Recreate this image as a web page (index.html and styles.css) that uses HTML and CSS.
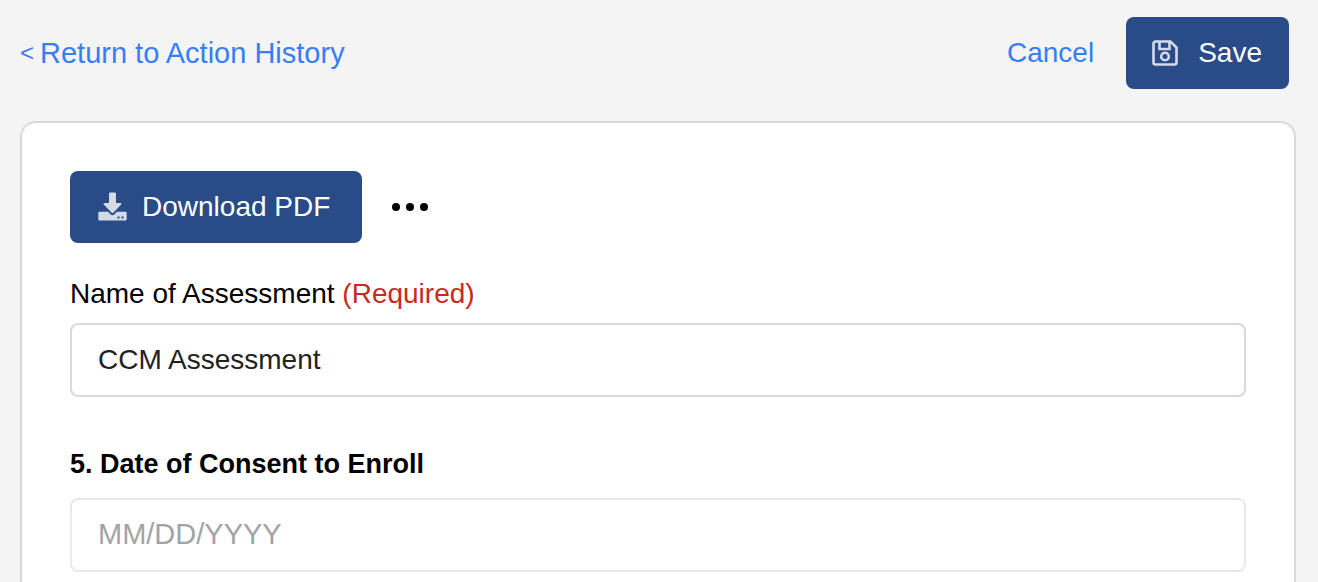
FILE: index.html
```
<!DOCTYPE html>
<html lang="en">
<head>
    <meta charset="UTF-8">
    <meta name="viewport" content="width=device-width, initial-scale=1.0">
    <title>CCM Assessment</title>
    <link rel="stylesheet" href="styles.css">
</head>
<body>

    <header>
        <a href="#" class="back-link"><span class="back-arrow">&lt;</span> Return to Action History</a>
        <div class="header-actions">
            <a href="#" class="cancel-link">Cancel</a>
            <button type="submit" form="assessmentForm" class="btn save-btn">
                <svg class="save-icon" viewBox="0 0 26 26" aria-hidden="true">
                    <path d="M3.500 1.500H18.500L24.500 7.500V22.500A2 2 0 0 1 22.500 24.500H3.500A2 2 0 0 1 1.500 22.500V3.500A2 2 0 0 1 3.500 1.500Z" fill="none" stroke="currentColor" stroke-width="2.600"/>
                    <path d="M7.500 2V9H17.500V2" fill="none" stroke="currentColor" stroke-width="2.600"/>
                    <circle cx="13" cy="16.500" r="3.800" fill="none" stroke="currentColor" stroke-width="2.600"/>
                </svg>
                Save
            </button>
        </div>
    </header>

    <main class="card">
        <div class="toolbar">
            <button type="button" class="btn download-btn">
                <svg class="download-icon" viewBox="0 0 30 30" aria-hidden="true">
                    <path d="M12.200 .5H16.800Q18 .5 18 1.700V11H22.500Q24.300 11.300 23 12.800L15.300 20.800Q14.500 21.500 13.700 20.800L6 12.800Q4.700 11.300 6.500 11H11V1.700Q11 .5 12.200 .5Z" fill="currentColor"/>
                    <path d="M1.500 19.800H10L12.500 22.300Q14.500 24 16.500 22.300L19 19.800H27.500Q28.700 19.800 28.700 21V27.300Q28.700 28.500 27.500 28.500H1.500Q.3 28.500 .3 27.300V21Q.3 19.800 1.500 19.800Z" fill="currentColor"/>
                    <rect class="drive-light" x="19.500" y="24.500" width="2" height="2"/>
                    <rect class="drive-light" x="23.500" y="24.500" width="2" height="2"/>
                </svg>
                Download PDF
            </button>
            <button type="button" class="more-btn" aria-label="More options">
                <svg class="more-icon" viewBox="0 0 36 8" aria-hidden="true">
                    <circle cx="4" cy="4" r="4"/>
                    <circle cx="18" cy="4" r="4"/>
                    <circle cx="32" cy="4" r="4"/>
                </svg>
            </button>
        </div>

        <form id="assessmentForm">
            <div class="field">
                <label for="nameInput">Name of Assessment <span class="required">(Required)</span></label>
                <input type="text" id="nameInput" value="CCM Assessment">
            </div>
            <div class="field question">
                <label for="consentDate">5. Date of Consent to Enroll</label>
                <input type="text" id="consentDate" placeholder="MM/DD/YYYY">
            </div>
        </form>
    </main>

</body>
</html>
```
FILE: styles.css
```
* {
  box-sizing: border-box;
}

body {
  display: flex;
  flex-direction: column;
  min-height: 100vh;
  margin: 0;
  background-color: #f4f4f4;
  color: #000;
  font-family: "Liberation Sans", Arial, sans-serif;
  font-size: 28px;
  line-height: 36px;
}

a {
  color: #377df6;
  text-decoration: none;
}

header {
  display: flex;
  justify-content: space-between;
  align-items: center;
  padding: 17px 29px 32px 20px;
}

.back-link {
  display: flex;
  align-items: center;
  gap: 6px;
  font-size: 29px;
}

.back-arrow {
  font-size: 24px;
}

.header-actions {
  display: flex;
  align-items: center;
  gap: 32px;
}

.btn {
  display: flex;
  align-items: center;
  height: 72px;
  border: none;
  border-radius: 8px;
  background-color: #294b88;
  color: #fff;
  font: inherit;
  cursor: pointer;
}

.save-btn {
  gap: 20px;
  padding: 0 27px 0 26px;
}

.save-icon {
  width: 26px;
  height: 26px;
  color: #d4dbe7;
}

.card {
  flex: 1 0 auto;
  margin: 0 22px 0 20px;
  padding: 48px 48px 0;
  border: 2px solid #d9d9d9;
  border-bottom: none;
  border-radius: 16px 16px 0 0;
  background-color: #fff;
}

.toolbar {
  display: flex;
  align-items: center;
  gap: 30px;
  margin-bottom: 33px;
}

.download-btn {
  gap: 14px;
  padding: 0 32px 0 28px;
}

.download-icon {
  width: 30px;
  height: 30px;
  color: #d4dbe7;
}

.drive-light {
  fill: #294b88;
}

.more-btn {
  display: flex;
  padding: 0;
  border: none;
  background: none;
  cursor: pointer;
}

.more-icon {
  width: 36px;
  height: 8px;
}

.field {
  display: flex;
  flex-direction: column;
  gap: 11px;
}

.required {
  color: #c92a1f;
}

.field input {
  width: 100%;
  height: 74px;
  padding: 0 26px;
  border: 2px solid #d9d9d9;
  border-radius: 8px;
  background-color: #fff;
  color: #222;
  font: inherit;
}

.question {
  gap: 16px;
  margin-top: 49px;
}

.question label {
  font-size: 27px;
  font-weight: bold;
}

.question input {
  border-color: #e9e9e9;
}

.question input::placeholder {
  color: #a3a3a3;
  font-size: 29px;
}
```
